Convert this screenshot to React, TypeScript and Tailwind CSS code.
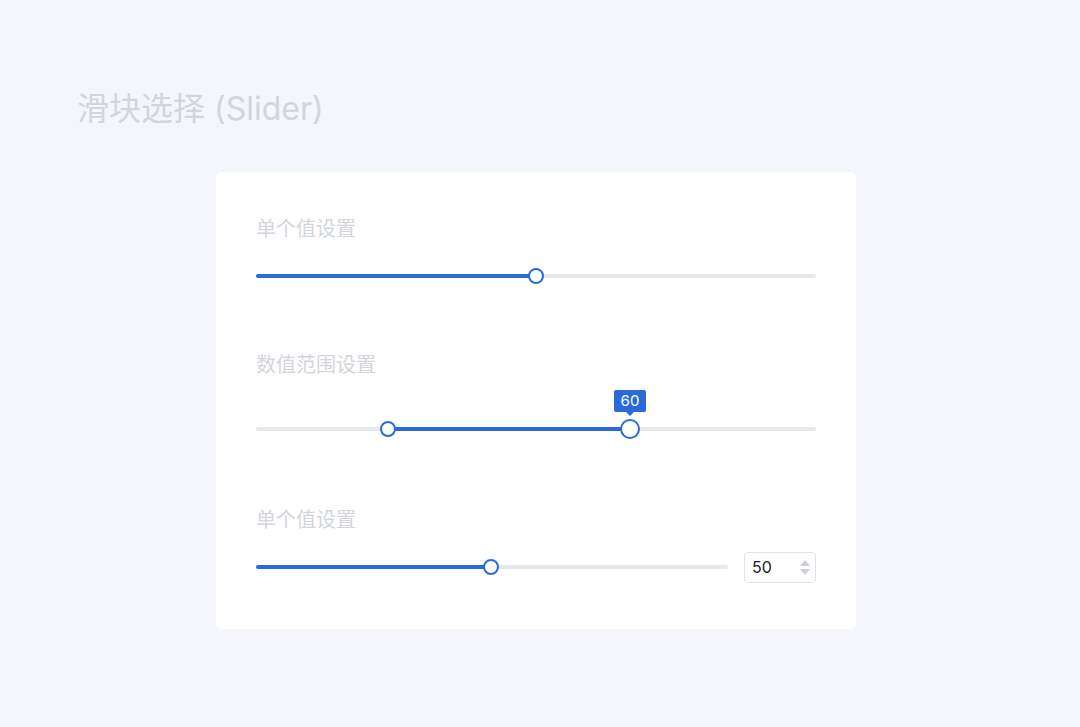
import React from "react";

const font = { fontFamily: 'Inter, "Noto Sans CJK SC", sans-serif' };

function Thumb({ left, big }: { left: number; big?: boolean }) {
  return (
    <div
      className={
        "absolute top-1/2 -translate-x-1/2 -translate-y-1/2 rounded-full bg-white border-2 border-[#2b6bd9] " +
        (big ? "w-[20px] h-[20px]" : "w-[16px] h-[16px]")
      }
      style={{ left }}
    />
  );
}

function Track({ width, from, to, children }: { width: number; from: number; to: number; children?: React.ReactNode }) {
  return (
    <div className="relative h-[20px]" style={{ width }}>
      <div className="absolute left-0 right-0 top-1/2 -translate-y-1/2 h-[4px] rounded-full bg-[#e6e8ec]" />
      <div
        className="absolute top-1/2 -translate-y-1/2 h-[4px] rounded-full bg-[#2b6bd9]"
        style={{ left: from, width: to - from }}
      />
      {children}
    </div>
  );
}

function Label({ children }: { children: React.ReactNode }) {
  return <div className="text-[20px] leading-[24px] text-[#d3d5da]">{children}</div>;
}

export default function App() {
  return (
    <div className="min-h-[727px] w-[1080px] bg-[#f4f6fb]" style={font}>
      <div className="pl-[77px] pt-[89px]">
        <h1 className="text-[32px] leading-[40px] text-[#d2d5dc]">滑块选择 (Slider)</h1>
      </div>
      <div className="ml-[216px] mt-[43px] w-[640px] rounded-[6px] bg-white px-[40px] pt-[45px] pb-[46px]">
        <Label>单个值设置</Label>
        <div className="mt-[25px]">
          <Track width={560} from={0} to={280}>
            <Thumb left={280} />
          </Track>
        </div>

        <div className="mt-[67px]">
          <Label>数值范围设置</Label>
        </div>
        <div className="mt-[42px]">
          <Track width={560} from={132} to={374}>
            <Thumb left={132} />
            <Thumb left={374} big />
            <div
              className="absolute -translate-x-1/2 top-[-29px] h-[22px] w-[32px] rounded-[2px] bg-[#2b6bd9] text-white text-[15px] leading-[22px] text-center"
              style={{ left: 374 }}
            >
              60
              <div className="absolute left-1/2 -translate-x-1/2 top-full w-0 h-0 border-x-[4px] border-x-transparent border-t-[4px] border-t-[#2b6bd9]" />
            </div>
          </Track>
        </div>

        <div className="mt-[69px]">
          <Label>单个值设置</Label>
        </div>
        <div className="mt-[19px] flex items-center justify-between h-[32px]">
          <Track width={472} from={0} to={235}>
            <Thumb left={235} />
          </Track>
          <div className="flex items-center justify-between w-[72px] h-[31px] rounded-[4px] border border-[#dfe2e7] pl-[7px] pr-[5px]">
            <span className="text-[16px] text-[#222]">50</span>
            <div className="flex flex-col gap-[3px] items-center">
              <div className="w-0 h-0 border-x-[5px] border-x-transparent border-b-[6px] border-b-[#cdd0d6]" />
              <div className="w-0 h-0 border-x-[5px] border-x-transparent border-t-[6px] border-t-[#cdd0d6]" />
            </div>
          </div>
        </div>
      </div>
    </div>
  );
}
